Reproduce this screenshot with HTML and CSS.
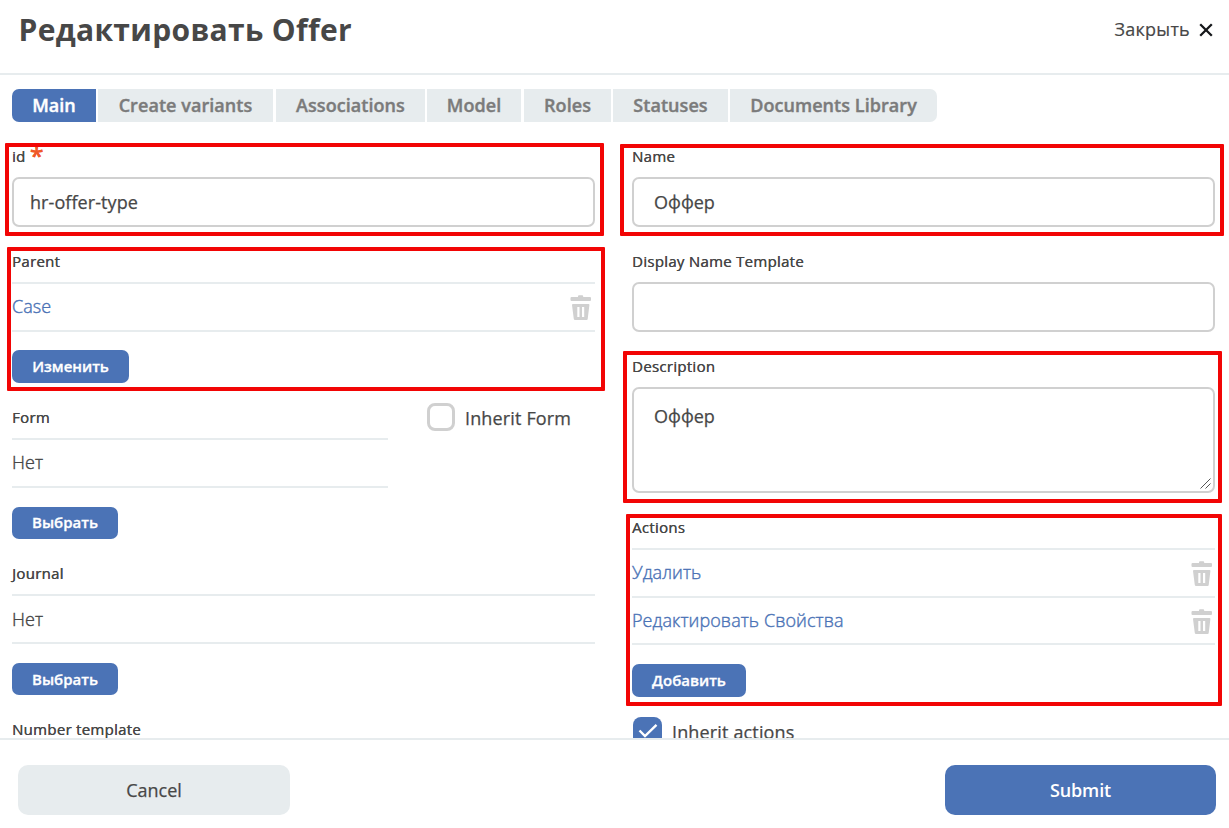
FILE: index.html
```html
<!DOCTYPE html>
<html lang="ru">
<head>
<meta charset="utf-8">
<title>Редактировать Offer</title>
<link rel="stylesheet" href="styles.css">
</head>
<body>
<svg class="defs" width="0" height="0" aria-hidden="true">
  <symbol id="trash" viewBox="0 0 22 26">
    <path fill="currentColor" fill-rule="evenodd" d="M8 1.200Q8 .2 9 .2h3.200Q13.200.2 13.200 1.200V2h6.800Q21 2 21 3v2Q21 6 20 6H1.500Q.5 6 .5 5V3Q.5 2 1.500 2H8zM3 9h15.500Q19.500 9 19.400 10L17.700 24Q17.600 25 16.600 25H5Q4 25 3.800 24L2 10Q2 9 3 9zM7.300 12v10h2.200V12zM12 12v10h2.200V12z"/>
  </symbol>
</svg>
<div class="dialog">
  <header class="header">
    <h1 class="title">Редактировать Offer</h1>
    <div class="close">
      <span class="close-text">Закрыть</span>
      <svg class="close-icon" width="14" height="14" viewBox="0 0 14 14"><path d="M1.200 1.200 12.800 12.800M12.800 1.200 1.200 12.800" stroke="#16181b" stroke-width="2.300" fill="none"/></svg>
    </div>
  </header>

  <main class="body">
    <nav class="tabs">
      <a class="tab tab-active tab-main">Main</a>
      <a class="tab tab-variants">Create variants</a>
      <a class="tab tab-assoc">Associations</a>
      <a class="tab tab-model">Model</a>
      <a class="tab tab-roles">Roles</a>
      <a class="tab tab-statuses">Statuses</a>
      <a class="tab tab-docs">Documents Library</a>
    </nav>

    <div class="columns">
      <div class="column">
        <section class="field">
          <div class="mark mark-id"></div>
          <label class="label">id <span class="required">*</span></label>
          <input class="input input-id" type="text" value="hr-offer-type">
        </section>
        <section class="field">
          <div class="mark mark-parent"></div>
          <div class="label">Parent</div>
          <ul class="list">
            <li class="item link"><span>Case</span><svg class="trash"><use href="#trash"/></svg></li>
          </ul>
          <button class="button button-change">Изменить</button>
        </section>
        <section class="field form-row">
          <div class="form-select">
            <div class="label">Form</div>
            <ul class="list"><li class="item"><span>Нет</span></li></ul>
            <button class="button button-choose">Выбрать</button>
          </div>
          <label class="check check-form"><span class="box"></span><span class="check-text">Inherit Form</span></label>
        </section>
        <section class="field">
          <div class="label">Journal</div>
          <ul class="list"><li class="item item-journal"><span>Нет</span></li></ul>
          <button class="button button-choose button-journal">Выбрать</button>
        </section>
        <section class="field">
          <div class="label">Number template</div>
        </section>
      </div>

      <div class="column">
        <section class="field">
          <div class="mark mark-name"></div>
          <label class="label">Name</label>
          <input class="input" type="text" value="Оффер">
        </section>
        <section class="field">
          <label class="label">Display Name Template</label>
          <input class="input" type="text" value="">
        </section>
        <section class="field">
          <div class="mark mark-description"></div>
          <label class="label">Description</label>
          <textarea class="input textarea">Оффер</textarea>
          <svg class="grip" width="11" height="11" viewBox="0 0 11 11"><path d="M.5 10.500 10.500.5M5.500 10.500 10.500 5.500" stroke="#555" stroke-width="1" fill="none"/></svg>
        </section>
        <section class="field">
          <div class="mark mark-actions"></div>
          <div class="label">Actions</div>
          <ul class="list">
            <li class="item link"><span>Удалить</span><svg class="trash"><use href="#trash"/></svg></li>
            <li class="item item-last link"><span>Редактировать Свойства</span><svg class="trash"><use href="#trash"/></svg></li>
          </ul>
          <button class="button button-add">Добавить</button>
        </section>
        <label class="check check-actions">
          <span class="box box-checked"><svg width="20" height="16" viewBox="0 0 20 16"><path d="M1.500 7.500 7 13 18.500 1.800" fill="none" stroke="#fff" stroke-width="2.400"/></svg></span>
          <span class="check-text">Inherit actions</span>
        </label>
      </div>
    </div>
  </main>

  <footer class="footer">
    <button class="action cancel">Cancel</button>
    <button class="action submit">Submit</button>
  </footer>
</div>
</body>
</html>
```
FILE: styles.css
```css
* { box-sizing: border-box; }
body {
  margin: 0;
  background: #fff;
  color: #474747;
  font-family: "Open Sans", "Noto Sans", sans-serif;
  overflow: hidden;
}
.defs { position: absolute; }
.dialog { display: flex; flex-direction: column; height: 828px; }

.header {
  display: flex;
  justify-content: space-between;
  flex: 0 0 75px;
  padding: 0 16px 0 18.500px;
  border-bottom: 2px solid #e7ecee;
}
.title { margin: 9px 0 0; font-size: 30px; line-height: 42px; font-weight: 700; letter-spacing: 0.33px; }
.close { display: flex; align-items: center; gap: 9px; height: 59px; font-size: 18px; }
.close-text { margin-top: -2px; letter-spacing: 0.25px; -webkit-text-stroke: 0.2px currentColor; }

.body { flex: 0 0 663px; overflow: hidden; padding: 14px 14px 0 12px; }
.tabs { display: flex; gap: 2px; height: 33px; }
.tab {
  height: 33px;
  background: #e7ecee;
  color: #7b7b7b;
  font-size: 18px;
  font-weight: 600;
  line-height: 33px;
  letter-spacing: 0.06px;
  text-align: center;
  white-space: nowrap;
  -webkit-text-stroke: 0.4px currentColor;
}
.tab-main { width: 84px; border-radius: 7px 0 0 7px; }
.tab-variants { width: 175px; margin-right: 1px; }
.tab-assoc { width: 149px; }
.tab-model { width: 94px; margin-right: 1px; }
.tab-roles { width: 87px; }
.tab-statuses { width: 115px; }
.tab-docs { width: 207px; border-radius: 0 7px 7px 0; }
.tab-active { background: #4b73b6; color: #fff; }

.columns { display: grid; grid-template-columns: 583px 583px; gap: 37px; }
.field { position: relative; margin-top: 25px; }
.label {
  display: block;
  height: 20px;
  margin-bottom: 10px;
  font-size: 15px;
  line-height: 18px;
  font-weight: 500;
  letter-spacing: 0.28px;
  white-space: nowrap;
  text-shadow: 0.3px 0 0 currentColor;
}
.required { color: #f05a28; font-size: 25px; line-height: 0; vertical-align: -3px; font-weight: 600; }
.input {
  display: block;
  width: 583px;
  height: 50px;
  padding: 0 20px;
  border: 2px solid #d0d0d0;
  border-radius: 7px;
  background: #fff;
  color: #474747;
  font: 500 18px/24px "Open Sans", "Noto Sans", sans-serif;
  outline: none;
  -webkit-text-stroke: 0.25px currentColor;
}
.input-id { padding-left: 16px; letter-spacing: 0.08px; }
.textarea { height: 106px; padding-top: 15px; resize: none; overflow: hidden; }
.grip { position: absolute; right: 4px; bottom: 4px; }

.list { list-style: none; margin: 0; padding: 0; border-top: 2px solid #e7ecee; }
.item {
  display: flex;
  justify-content: space-between;
  align-items: center;
  height: 48px;
  padding-right: 3px;
  border-bottom: 2px solid #e7ecee;
  font-size: 18px;
  font-weight: 300;
  letter-spacing: 0.08px;
}
.column:last-child .item { padding-right: 2px; }
.item span { padding-bottom: 2px; -webkit-text-stroke: 0.4px currentColor; }
.item-journal span { padding-bottom: 0; }
.item-last { height: 47px; }
.link { color: #4b73b6; }
.trash { width: 22px; height: 26px; margin-top: 2px; color: #d0d0d0; }

.button {
  display: block;
  padding: 0 0 2px;
  border: 0;
  border-radius: 7px;
  background: #4b73b6;
  color: #fff;
  font: 600 15px/30px "Open Sans", "Noto Sans", sans-serif;
  -webkit-text-stroke: 0.3px currentColor;
}
.button-change { width: 117px; height: 33px; margin-top: 18px; }
.button-choose { width: 106px; height: 32px; margin-top: 19px; }
.button-journal { padding-bottom: 0; }
.button-add { width: 114px; height: 33px; margin-top: 19px; }

.form-row { display: flex; gap: 38px; }
.form-select { width: 376px; }
.check { display: flex; align-items: flex-start; gap: 10px; }
.check-form { margin: -5px 0 0 1px; }
.check-actions { margin: 20px 0 0 1px; }
.box {
  display: flex;
  align-items: center;
  justify-content: center;
  width: 28px;
  height: 28px;
  border: 3px solid #d0d0d0;
  border-radius: 8px;
}
.box-checked { width: 29px; border: 0; background: #4b73b6; }
.check-text { font-size: 18px; line-height: 30px; font-weight: 500; letter-spacing: 0.15px; -webkit-text-stroke: 0.25px currentColor; }

.mark { position: absolute; border: 4px solid #f20505; border-radius: 1px; pointer-events: none; z-index: 1; }
.mark-id { left: -7px; top: -4px; width: 599px; height: 93px; }
.mark-name { left: -12px; top: -3px; width: 604px; height: 92px; }
.mark-parent { left: -5px; top: -5px; width: 598px; height: 144px; }
.mark-description { left: -9px; top: -6px; width: 599px; height: 152px; }
.mark-actions { left: -6px; top: -4px; width: 596px; height: 192px; }

.footer {
  display: flex;
  justify-content: space-between;
  flex: 1;
  padding: 25px 13px 0 18px;
  border-top: 2px solid #e7ecee;
  background: #fff;
}
.action {
  height: 50px;
  padding: 0;
  border: 0;
  border-radius: 10px;
  font: 500 18px/50px "Open Sans", "Noto Sans", sans-serif;
}
.cancel { width: 272px; background: #e7ecee; color: #474747; -webkit-text-stroke: 0.25px currentColor; }
.submit { width: 271px; background: #4b73b6; color: #fff; font-weight: 600; letter-spacing: -0.1px; }
```
